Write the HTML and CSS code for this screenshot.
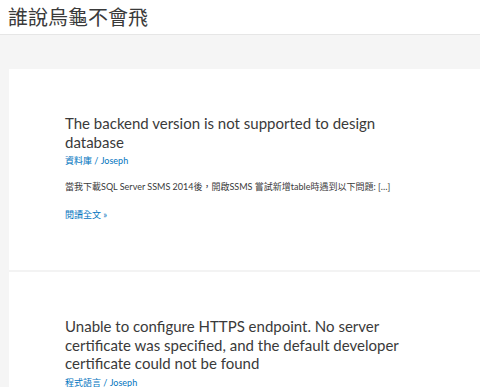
FILE: index.html
```html
<!DOCTYPE html>
<html lang="zh-Hant">
<head>
<meta charset="utf-8">
<title>誰說烏龜不會飛</title>
<link rel="stylesheet" href="styles.css">
</head>
<body>
<header class="site-header">
  <div class="site-title">誰說烏龜不會飛</div>
</header>
<main class="site-main">
  <article class="post">
    <h2 class="post-title">The backend version is not supported to design database</h2>
    <div class="post-meta"><a href="#">資料庫</a> / <a href="#">Joseph</a></div>
    <p class="post-excerpt">當我下載SQL Server SSMS 2014後，開啟SSMS 嘗試新增table時遇到以下問題: […]</p>
    <p class="read-more"><a href="#">閱讀全文 »</a></p>
  </article>
  <article class="post">
    <h2 class="post-title">Unable to configure HTTPS endpoint. No server certificate was specified, and the default developer certificate could not be found</h2>
    <div class="post-meta"><a href="#">程式語言</a> / <a href="#">Joseph</a></div>
  </article>
</main>
</body>
</html>
```
FILE: styles.css
```css
html, body {
  margin: 0;
  padding: 0;
}
body {
  background: #f5f5f5;
  font-family: "Lato", "Noto Sans CJK TC", sans-serif;
  color: #3a3a3a;
  overflow: hidden;
}
.site-header {
  background: #fff;
  height: 34px;
  border-bottom: 1px solid #e6e6e6;
  padding-left: 8px;
}
.site-title {
  font-family: "Noto Sans CJK TC", sans-serif;
  font-size: 20px;
  line-height: 34px;
  color: #3a3a3a;
}
.site-main {
  padding: 34px 0 0 9px;
}
.post {
  background: #fff;
  padding: 45px 65px 48px 56px;
  border-bottom: 2px solid #f3f3f3;
}
.post-title {
  margin: 0;
  font-weight: 400;
  font-size: 15px;
  line-height: 18.5px;
  color: #3a3a3a;
}
.post-meta {
  margin-top: 3px;
  font-size: 9px;
  line-height: 13px;
  color: #0274be;
}
.post-meta a, .read-more a {
  color: #0274be;
  text-decoration: none;
}
.post-excerpt {
  margin: 13px 0 0;
  font-size: 9px;
  line-height: 14px;
  color: #3a3a3a;
}
.read-more {
  margin: 14px 0 0;
  font-size: 9px;
  line-height: 14px;
}
```
